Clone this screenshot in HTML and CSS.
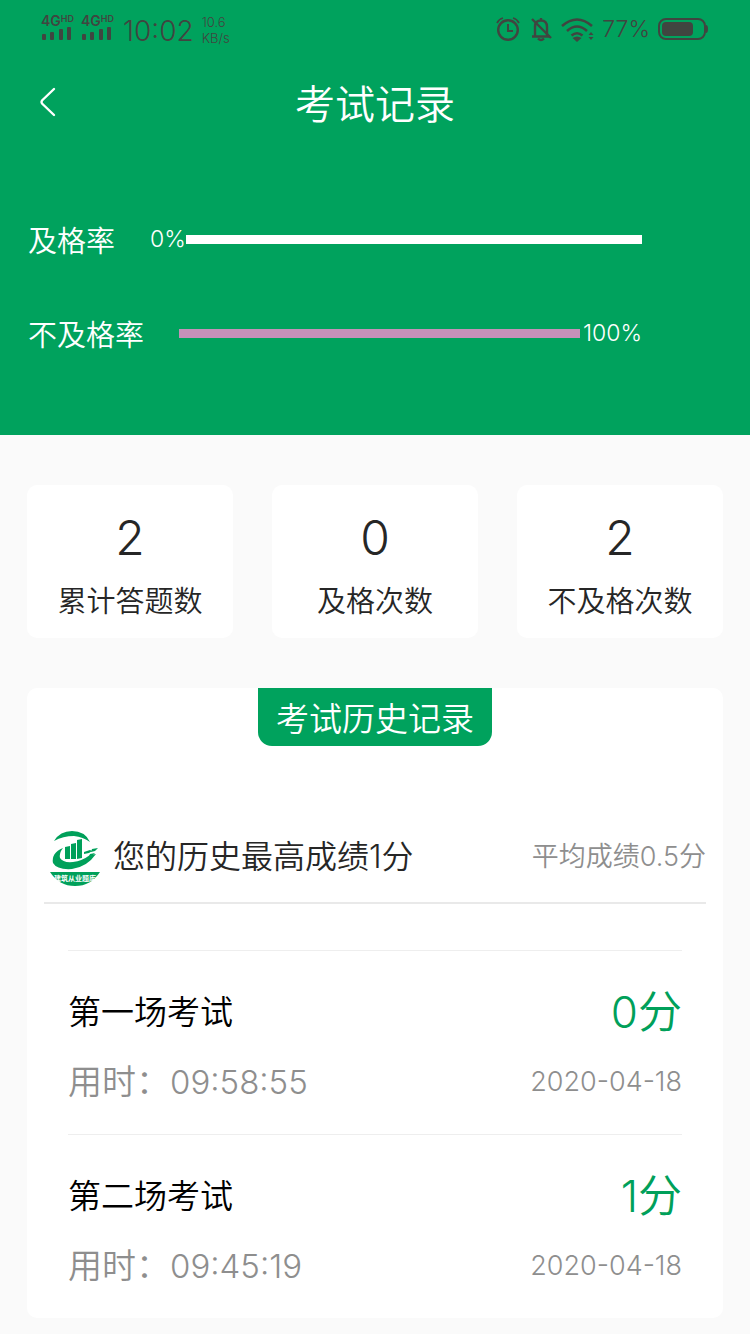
FILE: index.html
```html
<!DOCTYPE html>
<html lang="zh-CN">
<head>
<meta charset="utf-8">
<meta name="viewport" content="width=device-width, initial-scale=1">
<title>考试记录</title>
<link rel="stylesheet" href="styles.css">
</head>
<body>
<header class="hero">
  <div class="status">
    <div class="status-group">
      <div class="signal"><span class="signal-name">4G<span class="signal-hd">HD</span></span>
        <svg width="32" height="13" viewBox="0 0 32 13" fill="#404540"><rect x="1" y="7" width="4" height="6" rx="1"/><rect x="9" y="5" width="4" height="8" rx="1"/><rect x="18" y="2" width="4" height="11" rx="1"/><rect x="26" y="0" width="4" height="13" rx="1"/></svg>
      </div>
      <div class="signal"><span class="signal-name">4G<span class="signal-hd">HD</span></span>
        <svg width="32" height="13" viewBox="0 0 32 13" fill="#404540"><rect x="1" y="7" width="4" height="6" rx="1"/><rect x="9" y="5" width="4" height="8" rx="1"/><rect x="18" y="2" width="4" height="11" rx="1"/><rect x="26" y="0" width="4" height="13" rx="1"/></svg>
      </div>
      <time class="clock">10:02</time>
      <div class="speed"><span>10.6</span><span>KB/s</span></div>
    </div>
    <div class="status-group">
      <svg width="26" height="26" viewBox="0 0 26 26" fill="none" stroke="#404540" stroke-width="2.4"><circle cx="14" cy="14" r="9.8"/><path d="M14 8v7h5" stroke-width="2"/><path d="M3 7q2-4 6-5M19 2q4 1 6 5" stroke-width="1.8"/></svg>
      <svg width="24" height="26" viewBox="0 0 24 26" fill="none" stroke="#404540" stroke-width="2.4"><path d="M4 20.500h18M7 20v-9q0-6.500 6-6.500t6 6.500v9M13 4V2"/><path d="M10 22.500q3 3 6 0M4 3l19 19"/></svg>
      <svg width="34" height="26" viewBox="0 0 34 26" fill="none" stroke="#404540" stroke-width="2.6"><path d="M2 10q15-13 30 0M7 15q10-9 20 0M11.500 19.500q5.500-4.500 11 0"/><path d="M12.500 22q4.500-3 9 0L17 26z" fill="#404540" stroke="none"/><path d="M28.500 19l2.500-3 2.500 3zM28.500 21l2.500 3 2.500-3z" fill="#404540" stroke="none"/></svg>
      <span class="battery-level">77%</span>
      <svg width="51" height="24" viewBox="0 0 51 24" fill="none"><rect x="1" y="2" width="46" height="20" rx="7" stroke="#404540" stroke-width="2"/><rect x="4" y="5" width="31" height="14" rx="4" fill="#404540"/><path d="M48 8q2 0 2 4t-2 4" fill="#404540"/></svg>
    </div>
  </div>
  <nav class="nav">
    <button class="back" aria-label="返回"><svg width="18" height="32" viewBox="0 0 18 32" fill="none" stroke="#fff" stroke-width="2.4" stroke-linecap="round" stroke-linejoin="round"><path d="M15 3L3 14.500Q2 16 3 17.500L15 29"/></svg></button>
    <h1 class="title">考试记录</h1>
  </nav>
  <div class="rates">
    <div class="rate"><span class="rate-label">及格率</span><span class="rate-value">0%</span><div class="bar" role="progressbar" aria-label="及格率" aria-valuenow="0"></div></div>
    <div class="rate"><span class="rate-label">不及格率</span><div class="bar bar-fail" role="progressbar" aria-label="不及格率" aria-valuenow="100"></div><span class="rate-value">100%</span></div>
  </div>
</header>
<main class="content">
  <section class="stats">
    <div class="stat"><span class="stat-number">2</span><span class="stat-label">累计答题数</span></div>
    <div class="stat"><span class="stat-number">0</span><span class="stat-label">及格次数</span></div>
    <div class="stat"><span class="stat-number">2</span><span class="stat-label">不及格次数</span></div>
  </section>
  <section class="history">
    <h2 class="tag">考试历史记录</h2>
    <div class="summary">
      <svg width="54" height="60" viewBox="0 0 54 60">
        <g fill="#00a05a">
          <path d="M6 14Q12 4 24 4Q37 4 42 15Q35 10 26 9Q15 9 6 14z"/>
          <path d="M17 20l5-1v13h-5zM23 17l5-1v16h-5zM29 13l5-1v19l-5 1z"/>
          <path d="M15 21Q11 26 12 31Q15 36 25 35Q34 34 42 28L48 27Q39 40 24 42Q9 43 5 36Q3 26 15 21z"/>
          <path d="M36 25l6-2 2 1-3 2-5 1zM44 22l6-1-3 3-4 1zM42 27l5-1-2 2-4 1z"/>
          <path d="M2 45H52Q43 59 27 59T2 45z"/>
        </g>
        <text class="logo-text" x="27" y="54" text-anchor="middle">建筑从业题库</text>
      </svg>
      <span class="best">您的历史最高成绩1分</span>
      <span class="average">平均成绩0.5分</span>
    </div>
    <ul class="exams">
      <li class="exam">
        <div class="exam-row"><span class="exam-name">第一场考试</span><span class="score">0分</span></div>
        <div class="exam-row exam-meta"><span class="used">用时：<time class="duration">09:58:55</time></span><time class="date">2020-04-18</time></div>
      </li>
      <li class="exam">
        <div class="exam-row"><span class="exam-name">第二场考试</span><span class="score">1分</span></div>
        <div class="exam-row exam-meta"><span class="used">用时：<time class="duration">09:45:19</time></span><time class="date">2020-04-18</time></div>
      </li>
    </ul>
  </section>
</main>
</body>
</html>
```
FILE: styles.css
```css
* { box-sizing: border-box; }
body {
  margin: 0;
  background: #fafafa;
  color: #262626;
  font-family: Inter, "Noto Sans CJK SC", sans-serif;
  font-weight: 350;
}
h1, h2, ul { margin: 0; padding: 0; font-weight: 350; list-style: none; }
svg { display: block; flex: none; }

.hero { background: #00a25d; color: #fff; padding-bottom: 78px; }
.status {
  display: flex;
  justify-content: space-between;
  align-items: center;
  height: 58px;
  padding: 0 41px;
  color: #404540;
}
.status-group { display: flex; align-items: center; gap: 8px; }
.signal { width: 32px; padding-bottom: 4px; }
.signal-name { display: flex; font-size: 14px; line-height: 13px; font-weight: 600; }
.signal-hd { font-size: 9px; line-height: 9px; }
.clock { margin-left: 2px; padding-top: 3px; font-size: 28px; line-height: 32px; }
.speed { display: flex; flex-direction: column; padding-top: 2px; font-size: 13px; line-height: 16px; }
.battery-level { font-size: 23px; line-height: 28px; }

.nav {
  display: grid;
  grid-template-columns: 1fr auto 1fr;
  align-items: center;
  height: 88px;
  padding: 0 39px;
}
.back { justify-self: start; padding: 0; border: 0; background: none; }
.title, .rate-label, .tag { font-family: "Noto Sans CJK SC", sans-serif; }
.title { font-size: 40px; line-height: 60px; }

.rates { display: grid; gap: 46px; padding: 69px 108px 0 28px; }
.rate { display: flex; align-items: center; height: 48px; }
.rate-label { margin-right: 35px; font-size: 29px; line-height: 48px; }
.rate-value { font-size: 23px; }
.bar { flex: 1; height: 9px; background: #fff; }
.bar-fail { background: #c591b9; }
.bar-fail + .rate-value { padding-left: 3px; }

.content { padding: 50px 27px 18px; }
.stats { display: grid; grid-template-columns: repeat(3, 1fr); gap: 39px; }
.stat {
  display: flex;
  flex-direction: column;
  align-items: center;
  padding: 24px 0 14px;
  border-radius: 10px;
  background: #fff;
}
.stat-number { font-size: 48px; line-height: 58px; }
.stat-label { margin-top: 13px; font-size: 29px; line-height: 44px; }

.history { margin-top: 50px; padding: 0 17px; border-radius: 10px; background: #fff; }
.tag {
  width: fit-content;
  margin: 0 auto;
  padding: 0 18px;
  border-radius: 0 0 14px 14px;
  background: #00a25d;
  color: #fff;
  font-size: 33px;
  line-height: 58px;
}
.summary {
  display: flex;
  align-items: center;
  margin-top: 66px;
  padding: 15px 0 15px 4px;
  border-bottom: 2px solid #e9e9e9;
}
.logo-text { fill: #fff; font-size: 7px; font-weight: 700; }
.best { margin-left: 11px; font-size: 32px; line-height: 48px; }
.average { margin-left: auto; color: #8e8e8e; font-size: 27px; line-height: 48px; }

.exams { padding: 46px 24px 0; }
.exam { padding: 29px 0 20px; border-top: 1px solid #eee; }
.exam-row { display: flex; justify-content: space-between; align-items: center; line-height: 64px; }
.exam-name { color: #000; font-size: 33px; }
.score { color: #00a05a; font-size: 44px; }
.exam-meta { margin-top: 6px; color: #8e8e8e; }
.used { font-size: 34px; }
.duration { font-size: 33px; }
.date { font-size: 27px; }
```
